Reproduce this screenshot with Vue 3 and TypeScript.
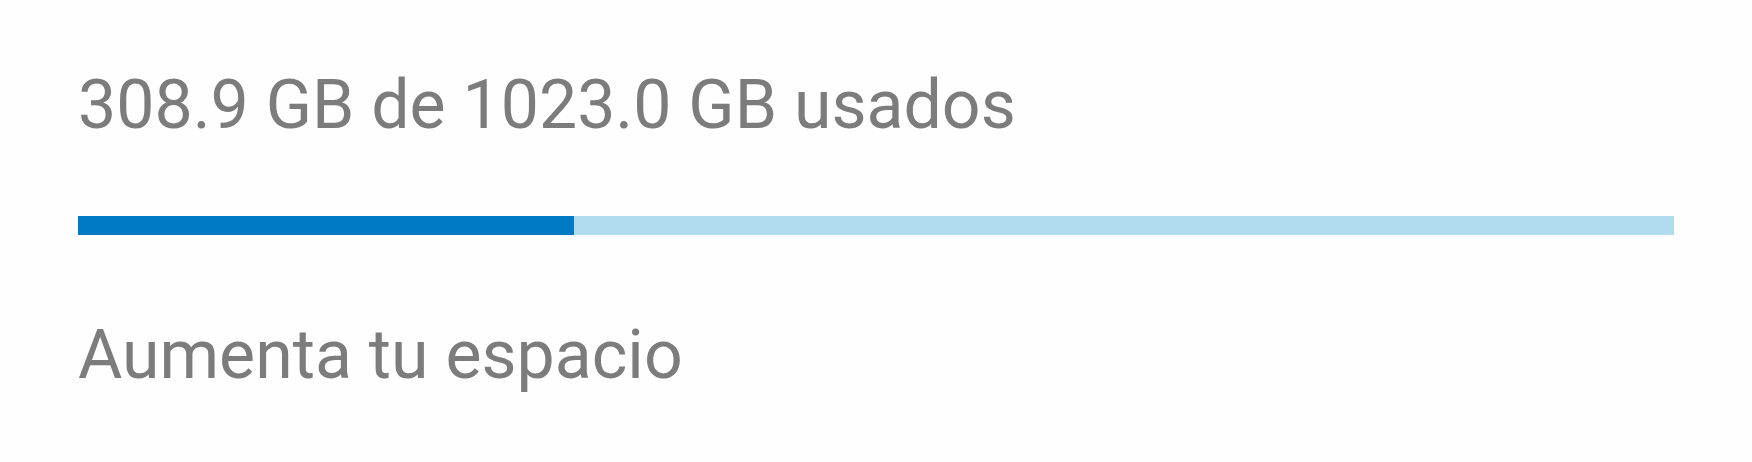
<script setup lang="ts">
const usedGb = 308.9
const totalGb = 1023
const usedPercent = 31.1
</script>

<template>
  <section class="storage">
    <label class="summary" for="quota">{{ usedGb.toFixed(1) }} GB de {{ totalGb.toFixed(1) }} GB usados</label>
    <progress id="quota" class="bar" max="100" :value="usedPercent"></progress>
    <a class="upgrade" href="#">Aumenta tu espacio</a>
  </section>
</template>

<style scoped>
.storage {
  display: flex;
  flex-direction: column;
  align-items: flex-start;
  padding: 65px 78px 64px;
  font-family: Roboto, sans-serif;
  font-size: 68px;
  line-height: 80px;
  color: #7c7c7c;
}

.bar {
  appearance: none;
  display: block;
  width: 100%;
  height: 19px;
  margin: 71px 0 80px;
  border: 0;
  background: #b0dcf0;
}

.bar::-webkit-progress-bar {
  background: #b0dcf0;
}

.bar::-webkit-progress-value {
  background: #007ac5;
}

.upgrade {
  color: inherit;
  text-decoration: none;
}
</style>

<style>
body {
  background: #fefefe;
}
</style>
